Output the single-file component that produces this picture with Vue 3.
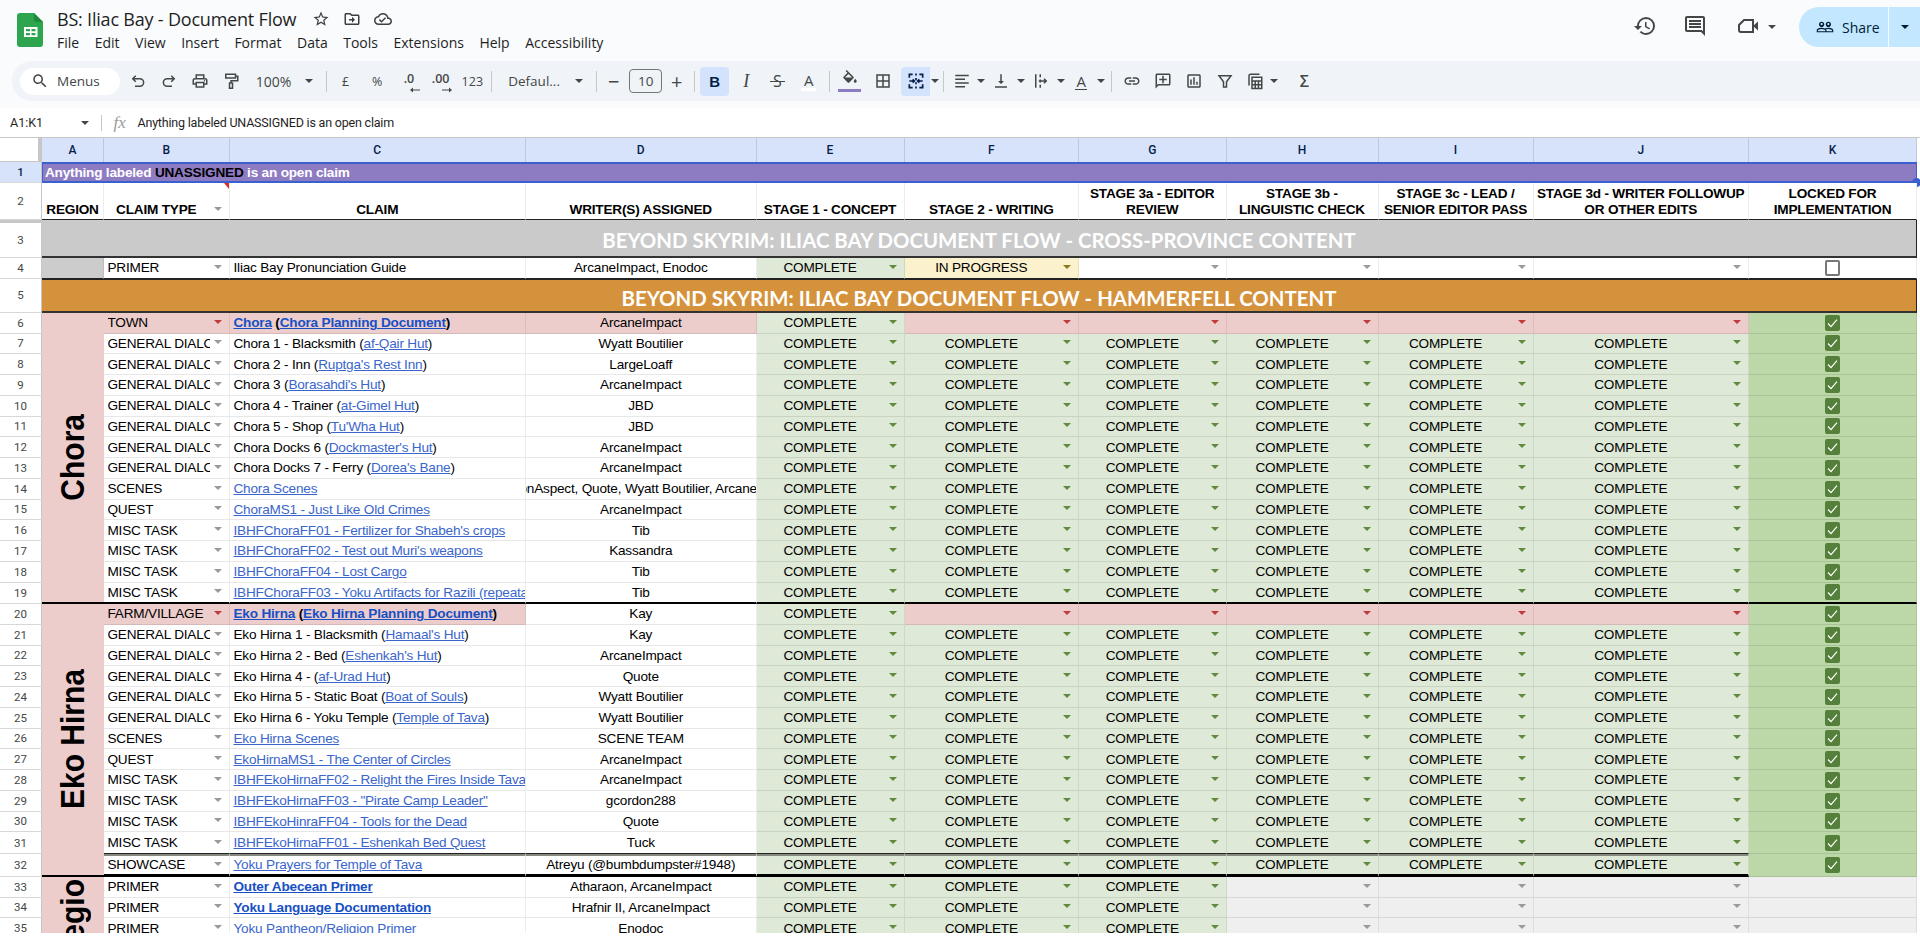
<script setup>
// paths of the material style icons used in the header and toolbar
const icons = {
  star: '<path d="M22 9.24l-7.19-.62L12 2 9.19 8.63 2 9.24l5.46 4.73L5.82 21 12 17.27 18.18 21l-1.63-7.03L22 9.24zM12 15.4l-3.76 2.27 1-4.28-3.32-2.88 4.38-.38L12 6.1l1.71 4.04 4.38.38-3.32 2.88 1 4.28L12 15.4z"/>',
  move: '<path d="M20 6h-8l-2-2H4c-1.1 0-2 .9-2 2v12c0 1.1.9 2 2 2h16c1.1 0 2-.9 2-2V8c0-1.1-.9-2-2-2zm0 12H4V6h5.17l2 2H20v10zm-8-4H8v-2h4V9l4 4-4 4v-3z"/>',
  cloud: '<path d="M19.35 10.04C18.67 6.59 15.64 4 12 4 9.11 4 6.6 5.64 5.35 8.04 2.34 8.36 0 10.91 0 14c0 3.31 2.69 6 6 6h13c2.76 0 5-2.24 5-5 0-2.64-2.05-4.78-4.65-4.96zM19 18H6c-2.21 0-4-1.79-4-4 0-2.05 1.53-3.76 3.56-3.97l1.07-.11.5-.95C8.08 7.14 9.94 6 12 6c2.62 0 4.88 1.86 5.39 4.43l.3 1.5 1.53.11c1.56.1 2.78 1.41 2.78 2.96 0 1.65-1.35 3-3 3zm-9-3.82l-2.09-2.09L6.5 13.5 10 17l6.01-6.01-1.41-1.41z"/>',
  search: '<path d="M15.5 14h-.79l-.28-.27C15.41 12.59 16 11.11 16 9.5 16 5.91 13.09 3 9.5 3S3 5.91 3 9.5 5.91 16 9.5 16c1.61 0 3.09-.59 4.23-1.57l.27.28v.79l5 4.99L20.49 19l-4.99-5zm-6 0C7.01 14 5 11.99 5 9.5S7.01 5 9.5 5 14 7.01 14 9.5 11.99 14 9.5 14z"/>',
  undo: '<path class="ln" d="M9 5 5 9l4 4M5 9h9.5a5 5 0 0 1 0 10H8"/>',
  redo: '<path class="ln" d="M15 5l4 4-4 4M19 9H9.5a5 5 0 0 0 0 10H16"/>',
  print: '<path d="M19 8h-1V3H6v5H5c-1.66 0-3 1.34-3 3v6h4v4h12v-4h4v-6c0-1.66-1.34-3-3-3zM8 5h8v3H8V5zm8 12v2H8v-4h8v2zm2-2v-2H6v2H4v-4c0-.55.45-1 1-1h14c.55 0 1 .45 1 1v4h-2z"/><circle cx="18" cy="11.5" r="1"/>',
  paint: '<path class="ln" d="M5 3h13v5H5zM18 5.5h3v6h-9v3M10 14.5h4v7h-4z"/>',
  bucket: '<path d="M16.56 8.94 7.62 0 6.21 1.41l2.38 2.38-5.15 5.15c-.59.59-.59 1.54 0 2.12l5.5 5.5c.29.29.68.44 1.06.44s.77-.15 1.06-.44l5.5-5.5c.59-.58.59-1.53 0-2.12zM5.21 10 10 5.21 14.79 10H5.21zM19 11.5s-2 2.17-2 3.5c0 1.1.9 2 2 2s2-.9 2-2c0-1.33-2-3.5-2-3.5z"/>',
  borders: '<path d="M3 3v18h18V3H3zm8 16H5v-6h6v6zm0-8H5V5h6v6zm8 8h-6v-6h6v6zm0-8h-6V5h6v6z"/>',
  merge: '<path class="ln" d="M8 4H4v4M4 16v4h4M16 4h4v4M20 16v4h-4M12 3v2.5M12 8.5V11M12 13.5V16M12 18.5V21M4 12h6M8 10l2 2-2 2M20 12h-6M16 10l-2 2 2 2"/>',
  align: '<path class="ln" d="M3 4.5h18M3 9.5h13M3 14.5h18M3 19.5h13"/>',
  valign: '<path d="M16 12h-3V3h-2v9H8l4 4 4-4zM4 19v2h16v-2H4z"/>',
  wrap: '<path class="ln" d="M5 3v18M11 3v4M11 10v4M11 17v4M9 12h10M16 9l3 3-3 3"/>',
  link: '<path d="M3.9 12c0-1.71 1.39-3.1 3.1-3.1h4V7H7c-2.76 0-5 2.24-5 5s2.24 5 5 5h4v-1.9H7c-1.71 0-3.1-1.39-3.1-3.1zM8 13h8v-2H8v2zm9-6h-4v1.9h4c1.71 0 3.1 1.39 3.1 3.1s-1.39 3.1-3.1 3.1h-4V17h4c2.76 0 5-2.24 5-5s-2.24-5-5-5z"/>',
  addnote: '<path d="M20 2H4c-1.1 0-2 .9-2 2v18l4-4h14c1.1 0 2-.9 2-2V4c0-1.1-.9-2-2-2zm0 14H5.17L4 17.17V4h16v12zM11 5h2v4h4v2h-4v4h-2v-4H7V9h4V5z"/>',
  chart: '<path d="M19 3H5c-1.1 0-2 .9-2 2v14c0 1.1.9 2 2 2h14c1.1 0 2-.9 2-2V5c0-1.1-.9-2-2-2zm0 16H5V5h14v14zM7 10h2v7H7zm4-3h2v10h-2zm4 6h2v4h-2z"/>',
  filter: '<path class="ln" d="M4 5h16l-6 8v7h-4v-7z"/>',
  calc: '<path class="ln" d="M4 18V5a2 2 0 0 1 2-2h12"/><path class="ln" d="M8 7h13v15H8zM8 12h13M8 17h13M12.3 12v10M16.6 12v10"/>',
  history: '<path d="M13 3a9 9 0 0 0-9 9H1l3.89 3.89.07.14L9 12H6c0-3.87 3.13-7 7-7s7 3.13 7 7-3.13 7-7 7c-1.93 0-3.68-.79-4.94-2.06l-1.42 1.42A8.954 8.954 0 0 0 13 21a9 9 0 0 0 0-18zm-1 5v5l4.28 2.54.72-1.21-3.5-2.08V8H12z"/>',
  comments: '<path d="M21.99 4c0-1.1-.89-2-1.99-2H4c-1.1 0-2 .9-2 2v12c0 1.1.9 2 2 2h14l4 4-.01-18zM20 4v13.17L18.83 16H4V4h16zM6 12h12v2H6zm0-3h12v2H6zm0-3h12v2H6z"/>',
  meet: '<path class="ln" d="M8 6h9v12H5a2 2 0 0 1-2-2v-5z"/><path d="M17 12l5-4.5v9z"/>',
  people: '<path d="M16.5 13c-1.2 0-3.07.34-4.5 1-1.43-.67-3.3-1-4.5-1C5.33 13 1 14.08 1 16.25V19h22v-2.75c0-2.17-4.33-3.25-6.5-3.25zm-4 4.5h-10v-1.25c0-.54 2.56-1.75 5-1.75s5 1.21 5 1.75v1.25zm9 0H14v-1.25c0-.46-.2-.86-.52-1.22.88-.3 1.96-.53 3.02-.53 2.44 0 5 1.21 5 1.75v1.25zM7.5 12c1.93 0 3.5-1.57 3.5-3.5S9.43 5 7.5 5 4 6.57 4 8.5 5.57 12 7.5 12zm0-5.5c.83 0 1.5.67 1.5 1.5s-.67 1.5-1.5 1.5S6 8.83 6 8s.67-1.5 1.5-1.5zm9 5.5c1.93 0 3.5-1.57 3.5-3.5S18.43 5 16.5 5 13 6.57 13 8.5s1.57 3.5 3.5 3.5zm0-5.5c.83 0 1.5.67 1.5 1.5s-.67 1.5-1.5 1.5S15 8.83 15 8s.67-1.5 1.5-1.5z"/>',
};

const menus = ["File", "Edit", "View", "Insert", "Format", "Data", "Tools", "Extensions", "Help", "Accessibility"];
const letters = ["A", "B", "C", "D", "E", "F", "G", "H", "I", "J", "K"];

const headers = [
  { text: "REGION" },
  { text: "CLAIM TYPE", dd: true },
  { text: "CLAIM" },
  { text: "WRITER(S) ASSIGNED" },
  { text: "STAGE 1 - CONCEPT" },
  { text: "STAGE 2 - WRITING" },
  { text: "STAGE 3a - EDITOR\nREVIEW" },
  { text: "STAGE 3b -\nLINGUISTIC CHECK" },
  { text: "STAGE 3c - LEAD /\nSENIOR EDITOR PASS" },
  { text: "STAGE 3d - WRITER FOLLOWUP\nOR OTHER EDITS" },
  { text: "LOCKED FOR\nIMPLEMENTATION" },
];

const GD = "GENERAL DIALOGUE";
const MT = "MISC TASK";
const done = { text: "COMPLETE", cls: "green" };
const red = { text: "", cls: "red" };
const blank = { text: "", cls: "" };
const grey = { text: "", cls: "grey" };
const allDone = [done, done, done, done, done, done];
const town = [done, red, red, red, red, red];

// type, text before link, link, text after link, writer
function row(n, type, before, link, after, writer, extra = {}) {
  return { n, type, before, link, after, writer, stages: allDone, lock: "on", ...extra };
}

const rows = [
  { n: 3, banner: "bgrey", text: "BEYOND SKYRIM: ILIAC BAY DOCUMENT FLOW - CROSS-PROVINCE CONTENT" },
  row(4, "PRIMER", "Iliac Bay Pronunciation Guide", "", "", "ArcaneImpact, Enodoc", {
    blankA: true,
    line: "dark",
    stages: [done, { text: "IN PROGRESS", cls: "yellow" }, blank, blank, blank, blank],
    lock: "off",
  }),
  { n: 5, banner: "borange", text: "BEYOND SKYRIM: ILIAC BAY DOCUMENT FLOW - HAMMERFELL CONTENT" },
  row(6, "TOWN", "", "Chora", "", "ArcaneImpact", {
    region: { text: "Chora", cls: "r1" },
    head: true,
    planning: "Chora Planning Document",
    writerRed: true,
    stages: town,
  }),
  row(7, GD, "Chora 1 - Blacksmith (", "af-Qair Hut", ")", "Wyatt Boutilier"),
  row(8, GD, "Chora 2 - Inn (", "Ruptga's Rest Inn", ")", "LargeLoaff"),
  row(9, GD, "Chora 3 (", "Borasahdi's Hut", ")", "ArcaneImpact"),
  row(10, GD, "Chora 4 - Trainer (", "at-Gimel Hut", ")", "JBD"),
  row(11, GD, "Chora 5 - Shop (", "Tu'Wha Hut", ")", "JBD"),
  row(12, GD, "Chora Docks 6 (", "Dockmaster's Hut", ")", "ArcaneImpact"),
  row(13, GD, "Chora Docks 7 - Ferry (", "Dorea's Bane", ")", "ArcaneImpact"),
  row(14, "SCENES", "", "Chora Scenes", "", "CrimsonAspect, Quote, Wyatt Boutilier, ArcaneImpact"),
  row(15, "QUEST", "", "ChoraMS1 - Just Like Old Crimes", "", "ArcaneImpact"),
  row(16, MT, "", "IBHFChoraFF01 - Fertilizer for Shabeh's crops", "", "Tib"),
  row(17, MT, "", "IBHFChoraFF02 - Test out Muri's weapons", "", "Kassandra"),
  row(18, MT, "", "IBHFChoraFF04 - Lost Cargo", "", "Tib"),
  row(19, MT, "", "IBHFChoraFF03 - Yoku Artifacts for Razili (repeatable)", "", "Tib", { line: "thick" }),
  row(20, "FARM/VILLAGE", "", "Eko Hirna", "", "Kay", {
    region: { text: "Eko Hirna", cls: "r2" },
    head: true,
    planning: "Eko Hirna Planning Document",
    stages: town,
  }),
  row(21, GD, "Eko Hirna 1 - Blacksmith (", "Hamaal's Hut", ")", "Kay"),
  row(22, GD, "Eko Hirna 2 - Bed (", "Eshenkah's Hut", ")", "ArcaneImpact"),
  row(23, GD, "Eko Hirna 4 - (", "af-Urad Hut", ")", "Quote"),
  row(24, GD, "Eko Hirna 5 - Static Boat (", "Boat of Souls", ")", "Wyatt Boutilier"),
  row(25, GD, "Eko Hirna 6 - Yoku Temple (", "Temple of Tava", ")", "Wyatt Boutilier"),
  row(26, "SCENES", "", "Eko Hirna Scenes", "", "SCENE TEAM"),
  row(27, "QUEST", "", "EkoHirnaMS1 - The Center of Circles", "", "ArcaneImpact"),
  row(28, MT, "", "IBHFEkoHirnaFF02 - Relight the Fires Inside Tava", "", "ArcaneImpact"),
  row(29, MT, "", 'IBHFEkoHirnaFF03 - "Pirate Camp Leader"', "", "gcordon288"),
  row(30, MT, "", "IBHFEkoHinraFF04 - Tools for the Dead", "", "Quote"),
  row(31, MT, "", "IBHFEkoHirnaFF01 - Eshenkah Bed Quest", "", "Tuck", { line: "dbl" }),
  row(32, "SHOWCASE", "", "Yoku Prayers for Temple of Tava", "", "Atreyu (@bumbdumpster#1948)", { line: "show" }),
  row(33, "PRIMER", "", "Outer Abecean Primer", "", "Atharaon, ArcaneImpact", {
    region: { text: "Regio", cls: "r3" },
    boldLink: true,
    stages: [done, done, done, grey, grey, grey],
    lock: "none",
  }),
  row(34, "PRIMER", "", "Yoku Language Documentation", "", "Hrafnir II, ArcaneImpact", {
    boldLink: true,
    stages: [done, done, done, grey, grey, grey],
    lock: "none",
  }),
  row(35, "PRIMER", "", "Yoku Pantheon/Religion Primer", "", "Enodoc", {
    stages: [done, done, done, grey, grey, grey],
    lock: "none",
  }),
];
</script>

<template>
  <div class="page">
    <header class="topbar">
      <svg class="logo" viewBox="0 0 26 34">
        <path d="M3 0h14l9 9v22a3 3 0 0 1-3 3H3a3 3 0 0 1-3-3V3a3 3 0 0 1 3-3z" fill="#2da44e" />
        <path d="M17 0l9 9h-6.5A2.5 2.5 0 0 1 17 6.5z" fill="#1f8a3c" />
        <path d="M7 14h13.5v10H7z" fill="#fff" />
        <path d="M9 16h4v2.2H9zm5.5 0h4v2.2h-4zM9 20h4v2.2H9zm5.5 0h4v2.2h-4z" fill="#2da44e" />
      </svg>
      <div class="docinfo">
        <div class="titlerow">
          <span class="title">BS: Iliac Bay - Document Flow</span>
          <svg class="ic ti" viewBox="0 0 24 24" v-html="icons.star"></svg>
          <svg class="ic ti" viewBox="0 0 24 24" v-html="icons.move"></svg>
          <svg class="ic ti" viewBox="0 0 24 24" v-html="icons.cloud"></svg>
        </div>
        <nav class="menus">
          <span v-for="m in menus" :key="m">{{ m }}</span>
        </nav>
      </div>
      <div class="actions">
        <svg class="ic big" viewBox="0 0 24 24" v-html="icons.history"></svg>
        <svg class="ic big" viewBox="0 0 24 24" v-html="icons.comments"></svg>
        <div class="meet">
          <svg class="ic big" viewBox="0 0 24 24" v-html="icons.meet"></svg>
          <i class="caret"></i>
        </div>
        <div class="share">
          <div class="share-main">
            <svg class="ic" viewBox="0 0 24 24" v-html="icons.people"></svg>
            <span>Share</span>
          </div>
          <div class="share-drop"><i class="caret"></i></div>
        </div>
      </div>
    </header>

    <div class="toolbar-wrap">
      <div class="toolbar">
        <div class="searchbox">
          <svg class="ic" viewBox="0 0 24 24" v-html="icons.search"></svg>
          <span>Menus</span>
        </div>
        <button class="tb"><svg class="ic" viewBox="0 0 24 24" v-html="icons.undo"></svg></button>
        <button class="tb"><svg class="ic" viewBox="0 0 24 24" v-html="icons.redo"></svg></button>
        <button class="tb"><svg class="ic" viewBox="0 0 24 24" v-html="icons.print"></svg></button>
        <button class="tb"><svg class="ic" viewBox="0 0 24 24" v-html="icons.paint"></svg></button>
        <div class="zoom"><span>100%</span><i class="caret"></i></div>
        <i class="sep"></i>
        <button class="tb num">£</button>
        <button class="tb num">%</button>
        <button class="tb num small">.0<svg class="arr" viewBox="0 0 10 6"><path d="M10 2.4H3V.5L0 3l3 2.5V3.6h7z" /></svg></button>
        <button class="tb num small">.00<svg class="arr" viewBox="0 0 10 6"><path d="M0 2.4h7V.5L10 3 7 5.5V3.6H0z" /></svg></button>
        <button class="tb num">123</button>
        <i class="sep"></i>
        <div class="fontpick"><span>Defaul...</span><i class="caret"></i></div>
        <i class="sep"></i>
        <button class="tb w27 plusminus">−</button>
        <div class="fontsize">10</div>
        <button class="tb w29 plusminus">+</button>
        <i class="sep"></i>
        <button class="tb w29 active bold-b">B</button>
        <button class="tb italic-i">I</button>
        <button class="tb strike-s">S</button>
        <button class="tb color-a"><span>A</span></button>
        <i class="sep gap5"></i>
        <button class="tb fill">
          <svg class="ic" viewBox="0 0 24 24" v-html="icons.bucket"></svg>
          <i class="swatch"></i>
        </button>
        <button class="tb gap2"><svg class="ic" viewBox="0 0 24 24" v-html="icons.borders"></svg></button>
        <button class="tb w29 active gap3"><svg class="ic navy" viewBox="0 0 24 24" v-html="icons.merge"></svg></button>
        <div class="dropcaret"><i class="caret"></i></div>
        <i class="sep"></i>
        <button class="tb w29"><svg class="ic" viewBox="0 0 24 24" v-html="icons.align"></svg></button>
        <div class="dropcaret"><i class="caret"></i></div>
        <button class="tb w30"><svg class="ic" viewBox="0 0 24 24" v-html="icons.valign"></svg></button>
        <div class="dropcaret"><i class="caret"></i></div>
        <button class="tb w30"><svg class="ic" viewBox="0 0 24 24" v-html="icons.wrap"></svg></button>
        <div class="dropcaret"><i class="caret"></i></div>
        <button class="tb w30 color-a rot"><span>A</span></button>
        <div class="dropcaret"><i class="caret"></i></div>
        <i class="sep gap5"></i>
        <button class="tb"><svg class="ic" viewBox="0 0 24 24" v-html="icons.link"></svg></button>
        <button class="tb"><svg class="ic" viewBox="0 0 24 24" v-html="icons.addnote"></svg></button>
        <button class="tb"><svg class="ic" viewBox="0 0 24 24" v-html="icons.chart"></svg></button>
        <button class="tb"><svg class="ic" viewBox="0 0 24 24" v-html="icons.filter"></svg></button>
        <button class="tb w28"><svg class="ic" viewBox="0 0 24 24" v-html="icons.calc"></svg></button>
        <div class="dropcaret"><i class="caret"></i></div>
        <button class="tb sigma">Σ</button>
      </div>
    </div>

    <div class="formula">
      <div class="namebox"><span>A1:K1</span><i class="caret"></i></div>
      <i class="sep tall"></i>
      <span class="fx">fx</span>
      <span class="ftext">Anything labeled UNASSIGNED is an open claim</span>
    </div>

    <div class="grid">
      <div class="corner"></div>
      <div v-for="l in letters" :key="l" class="colhead">{{ l }}</div>

      <div class="rownum sel">1</div>
      <div class="note">Anything labeled <b>UNASSIGNED</b> is an open claim</div>

      <div class="rownum">2</div>
      <div v-for="(h, i) in headers" :key="i" class="hcell" :class="{ dd: h.dd, noted: i === 1 }">{{ h.text }}</div>

      <template v-for="r in rows" :key="r.n">
        <div class="rownum" :class="{ frozen: r.n === 3 }">{{ r.n }}</div>
        <div v-if="r.banner" class="banner" :class="r.banner">{{ r.text }}</div>
        <template v-else>
          <div v-if="r.region" class="region" :class="r.region.cls"><span>{{ r.region.text }}</span></div>
          <div v-if="r.blankA" class="cell ablank" :class="r.line"></div>
          <div class="cell dd ctype" :class="[r.line, { red: r.head }]"><span>{{ r.type }}</span></div>
          <div class="cell claim" :class="[r.line, { red: r.head, strong: r.head || r.boldLink }]">
            <span class="claimtext">{{ r.before }}<a v-if="r.link">{{ r.link }}</a>{{ r.after }}<template v-if="r.planning"> (<a>{{ r.planning }}</a>)</template></span>
          </div>
          <div class="cell writer" :class="[r.line, { red: r.writerRed }]"><span>{{ r.writer }}</span></div>
          <div v-for="(s, i) in r.stages" :key="i" class="cell dd status" :class="[s.cls, r.line]">{{ s.text }}</div>
          <div class="cell lock" :class="[r.lock, r.line]">
            <svg v-if="r.lock === 'on'" class="check" viewBox="0 0 15 16">
              <rect width="15" height="16" rx="2" fill="#55803c" />
              <path d="M3 8.5l3 3.2 6-7" fill="none" stroke="#fff" stroke-width="1.2" />
            </svg>
            <i v-else-if="r.lock === 'off'" class="uncheck"></i>
          </div>
        </template>
      </template>
    </div>
  </div>
</template>

<style scoped>
.page {
  width: 1920px;
  height: 938px;
  overflow: hidden;
  display: flex;
  flex-direction: column;
  background: #fff;
  font-family: "Liberation Sans", Arial, sans-serif;
}

.ic {
  width: 18px;
  height: 18px;
  fill: #444746;
  flex: none;
}

.ic :deep(.ln) {
  fill: none;
  stroke: #444746;
  stroke-width: 2;
}

.ic.navy {
  width: 20px;
  height: 20px;
}

.ic.navy :deep(.ln) {
  stroke: #041e49;
}

.caret {
  display: block;
  flex: none;
  width: 0;
  height: 0;
  border-style: solid;
  border-width: 4.5px 4.5px 0;
  border-color: #444746 transparent transparent;
}

/* header */
.topbar {
  height: 61px;
  flex: none;
  display: flex;
  background: #f9fbfd;
  font-family: "Open Sans", sans-serif;
  color: #1f1f1f;
}

.logo {
  width: 26px;
  height: 34px;
  margin: 13px 14px 0 17px;
  flex: none;
}

.docinfo {
  padding-top: 6px;
}

.titlerow {
  display: flex;
  align-items: center;
  height: 26px;
}

.title {
  font-size: 18px;
  letter-spacing: -0.2px;
  width: 255px;
}

.ic.ti {
  width: 18px;
  height: 18px;
  margin-right: 13px;
  fill: #3c4043;
}

.menus {
  display: flex;
  margin-top: 1px;
  gap: 15.5px;
  font-size: 14px;
  color: #1f1f1f;
}

.actions {
  margin-left: auto;
  display: flex;
  align-items: center;
  align-self: flex-start;
  height: 40px;
  margin-top: 7px;
}

.ic.big {
  width: 24px;
  height: 24px;
  margin-right: 26px;
  position: relative;
  top: -1px;
}

.meet {
  display: flex;
  align-items: center;
  margin-left: 3px;
  margin-right: 23px;
}

.meet .ic.big {
  margin-right: 8px;
}

.share {
  width: 121px;
  height: 40px;
  display: flex;
  background: #c2e7ff;
  border-radius: 20px 0 0 20px;
  font-size: 14px;
  font-weight: 500;
  color: #001d35;
}

.share-main {
  width: 90px;
  display: flex;
  align-items: center;
  gap: 8px;
  padding-left: 17px;
  box-sizing: border-box;
  border-right: 1px solid #f9fbfd;
}

.share-main .ic {
  fill: #001d35;
}

.share-drop {
  flex: 1;
  display: flex;
  align-items: center;
  padding-left: 12px;
}

.share-drop .caret {
  border-top-color: #001d35;
}

/* toolbar */
.toolbar-wrap {
  height: 47px;
  flex: none;
  box-sizing: border-box;
  padding: 0 0 7px 12px;
  background: #f9fbfd;
}

.toolbar {
  height: 40px;
  display: flex;
  align-items: center;
  background: #f0f4f9;
  border-radius: 20px 0 0 20px;
  padding-left: 8px;
  font-family: "Open Sans", sans-serif;
  font-size: 13.5px;
  color: #444746;
}

.searchbox {
  width: 100px;
  height: 27px;
  margin-right: 2px;
  flex: none;
  box-sizing: border-box;
  padding-left: 11px;
  display: flex;
  align-items: center;
  gap: 8px;
  border-radius: 14px;
  background: #fff;
}

.tb {
  width: 31.2px;
  height: 29px;
  flex: none;
  padding: 0;
  display: flex;
  align-items: center;
  justify-content: center;
  border: 0;
  border-radius: 4px;
  background: none;
  color: inherit;
  font: inherit;
  position: relative;
}

.tb.num {
  width: 31.7px;
  font-size: 12.5px;
}

.tb.small {
  padding-bottom: 5px;
  box-sizing: border-box;
  font-weight: 600;
}

.arr {
  position: absolute;
  width: 10px;
  height: 6px;
  right: 5px;
  bottom: 3px;
  fill: #444746;
}

.tb.w27 {
  width: 27px;
}

.tb.w28 {
  width: 28px;
}

.tb.w29 {
  width: 29px;
}

.tb.w30 {
  width: 30px;
}

.tb.active {
  background: #d3e3fd;
  color: #041e49;
}

.gap2 {
  margin-left: 1.5px;
}

.gap3 {
  margin-left: 3px;
  border-radius: 4px 0 0 4px;
}

.plusminus {
  font-size: 20px;
}

.bold-b {
  margin-left: 2px;
  font-family: "Liberation Sans", sans-serif;
  font-weight: 700;
  font-size: 15px;
}

.italic-i {
  margin-left: 1.5px;
  font-family: "Liberation Serif", serif;
  font-style: italic;
  font-size: 18px;
}

.strike-s {
  font-size: 16px;
}

.strike-s::after {
  content: "";
  position: absolute;
  left: 8px;
  right: 8px;
  top: 14px;
  height: 1.5px;
  background: #444746;
}

.zoom span {
  font-size: 14px;
}

.color-a span {
  font-size: 15px;
  line-height: 16px;
  border-bottom: 3px solid #fff;
  padding: 0 3px;
}

.color-a.rot span {
  border-bottom: 1.5px solid #444746;
  padding: 0 1px;
}

.fill {
  flex-direction: column;
  justify-content: flex-start;
  padding-top: 3px;
  box-sizing: border-box;
}

.swatch {
  width: 23px;
  height: 3.5px;
  margin-top: 1px;
  background: #8e7cc3;
}

.sep {
  display: block;
  width: 1px;
  height: 21px;
  margin: 0 3px;
  flex: none;
  background: #c7c7c7;
}

.sep.gap5 {
  margin: 0 4px 0 5px;
}

.sep.tall {
  margin: 0;
  height: 16px;
}

.zoom {
  width: 76px;
  flex: none;
  box-sizing: border-box;
  padding: 0 10px 0 9px;
  display: flex;
  align-items: center;
  justify-content: space-between;
}

.fontpick {
  width: 98px;
  flex: none;
  box-sizing: border-box;
  padding: 0 10px 0 13px;
  display: flex;
  align-items: center;
  justify-content: space-between;
}

.fontsize {
  width: 33px;
  height: 24px;
  margin-left: 2px;
  flex: none;
  box-sizing: border-box;
  display: flex;
  align-items: center;
  justify-content: center;
  border: 1px solid #747775;
  border-radius: 4px;
}

.dropcaret {
  width: 10px;
  flex: none;
  display: flex;
  justify-content: center;
}

.dropcaret .caret {
  border-width: 4px 4px 0;
}

.sigma {
  margin-left: 10px;
  font-size: 16px;
  font-weight: 600;
}

/* formula bar */
.formula {
  height: 29px;
  flex: none;
  display: flex;
  align-items: center;
  font-family: Roboto, sans-serif;
  font-size: 12.5px;
  color: #1f1f1f;
}

.namebox {
  width: 101px;
  box-sizing: border-box;
  padding: 0 12px 0 10px;
  display: flex;
  align-items: center;
  justify-content: space-between;
}

.namebox .caret {
  border-width: 4px 4px 0;
}

.fx {
  width: 35.5px;
  text-align: center;
  font-family: "Liberation Serif", serif;
  font-style: italic;
  font-size: 17px;
  color: #9a9a9a;
}

.ftext {
  letter-spacing: -0.2px;
}

/* sheet */
.grid {
  height: 796px;
  flex: none;
  overflow: hidden;
  display: grid;
  grid-template-columns: 42px 62px 125.5px 296.5px 230.5px 148px 174.5px 147.5px 152px 155px 215.5px 168px;
  grid-template-rows:
    24px 21px 37px 37.5px 21px 34.5px 20.5px
    repeat(12, 20.75px) 21.5px
    repeat(11, 20.75px) 21.5px 23px
    repeat(3, 20.75px);
  font-size: 13.6px;
  letter-spacing: -0.2px;
  color: #000;
  border-top: 1px solid #c7c7c7;
  box-sizing: border-box;
}

.corner {
  background: #fff;
  border-right: 4px solid #c7c7c7;
  border-bottom: 1px solid #c7c7c7;
  box-sizing: border-box;
}

.colhead,
.rownum {
  display: flex;
  align-items: center;
  justify-content: center;
  box-sizing: border-box;
  font-family: Roboto, sans-serif;
  letter-spacing: 0;
}

.colhead {
  background: #d7e2fb;
  color: #041e49;
  font-size: 12px;
  font-weight: 500;
  border-right: 1px solid #c0c8dc;
}

.rownum {
  font-size: 11.5px;
  color: #444746;
  background: #fff;
  border-right: 1px solid #c7c7c7;
  border-bottom: 1px solid #d8d8d8;
}

.rownum.sel {
  background: #d7e2fb;
  color: #041e49;
  font-weight: 500;
}

.rownum.frozen {
  border-top: 3px solid #c7c7c7;
}

.note {
  grid-column: 2 / span 11;
  position: relative;
  display: flex;
  align-items: center;
  box-sizing: border-box;
  padding-left: 2px;
  background: #8e7cc3;
  border-style: solid;
  border-color: #3c5fd0;
  border-width: 2px 1.5px;
  color: #fff;
  font-weight: 700;
  white-space: pre;
}

.note b {
  color: #000;
}

.note::after {
  content: "";
  position: absolute;
  right: -5px;
  bottom: -6px;
  width: 9px;
  height: 9px;
  border-radius: 50%;
  background: #3c5fd0;
}

.hcell {
  display: flex;
  align-items: flex-end;
  justify-content: center;
  box-sizing: border-box;
  position: relative;
  padding-bottom: 1px;
  text-align: center;
  white-space: pre-line;
  line-height: 16px;
  font-weight: 700;
  background: #fff;
  border-right: 1px solid #ececec;
  border-bottom: 1px solid #222;
}

.hcell.dd {
  padding-right: 20px;
}

.hcell.dd::after {
  top: auto;
  bottom: 8px;
  margin: 0;
}

.hcell.noted::before {
  content: "";
  position: absolute;
  top: 0;
  right: 0;
  border-style: solid;
  border-width: 0 5px 6px 0;
  border-color: transparent #d93025 transparent transparent;
}

.banner {
  grid-column: 2 / span 11;
  display: flex;
  align-items: center;
  justify-content: center;
  box-sizing: border-box;
  padding-top: 5px;
  font-family: Lato, sans-serif;
  font-weight: 700;
  font-size: 20.4px;
  letter-spacing: 0;
  color: #fff;
  white-space: nowrap;
  border-right: 1px solid #222;
  border-bottom: 2px solid #333;
}

.bgrey {
  background: #cacaca;
}

.borange {
  background: #d5923c;
  border-top: 1px solid #222;
}

.region {
  grid-row: span 14;
  display: flex;
  align-items: center;
  justify-content: center;
  overflow: hidden;
  box-sizing: border-box;
  background: #eccdcc;
  border-bottom: 2px solid #000;
  font-weight: 700;
  font-size: 30px;
  letter-spacing: 0;
}

.region span {
  writing-mode: vertical-rl;
  transform: rotate(180deg) scaleX(1.1);
  white-space: nowrap;
}

.region.r2 {
  grid-row: span 13;
}

.region.r3 {
  grid-row: span 3;
  align-items: flex-start;
  padding-top: 2px;
  border-bottom: 0;
}

.cell {
  position: relative;
  display: flex;
  align-items: center;
  box-sizing: border-box;
  white-space: nowrap;
  overflow: hidden;
  background: #fff;
  border-right: 1px solid rgba(0, 0, 0, 0.07);
  border-bottom: 1px solid rgba(0, 0, 0, 0.09);
}

.dd::after {
  content: "";
  position: absolute;
  right: 7px;
  top: 50%;
  margin-top: -3px;
  border-style: solid;
  border-width: 4px 4px 0;
  border-color: #9a9a9a transparent transparent;
}

.ablank {
  background: #cccccc;
}

.ctype {
  padding-left: 3.5px;
}

.ctype span {
  width: 102.5px;
  overflow: hidden;
}

.claim {
  padding-left: 4px;
}

.claim a {
  color: #3a66cc;
  text-decoration: underline;
}

.claim.strong {
  font-weight: 700;
}

.claim.strong a {
  color: #1750c4;
}

.claimtext {
  white-space: pre;
}

.writer {
  justify-content: center;
}

.writer span {
  flex: none;
}

.status {
  justify-content: center;
  padding-right: 20px;
}

.green {
  background: #dee9d7;
}

.green::after {
  border-top-color: #5f8a3f;
}

.yellow {
  background: #fbf1cd;
}

.yellow::after {
  border-top-color: #8d7a1c;
}

.grey {
  background: #efefef;
}

.red {
  background: #eccdcc;
}

.red::after {
  border-top-color: #c23b3b;
}

.lock {
  justify-content: center;
}

.lock.on {
  background: #bcd7a8;
}

.lock.none {
  background: #efefef;
}

.check {
  width: 15px;
  height: 16px;
}

.uncheck {
  display: block;
  width: 15px;
  height: 16px;
  box-sizing: border-box;
  border: 2px solid #777;
  border-radius: 2px;
}

.dark {
  border-bottom: 1px solid #222;
}

.thick {
  border-bottom: 2px solid #000;
}

.dbl:not(.lock) {
  border-bottom: 1px solid #222;
}

.show:not(.lock) {
  border-top: 2px solid #85897f;
  border-bottom: 3px solid #000;
}
</style>
